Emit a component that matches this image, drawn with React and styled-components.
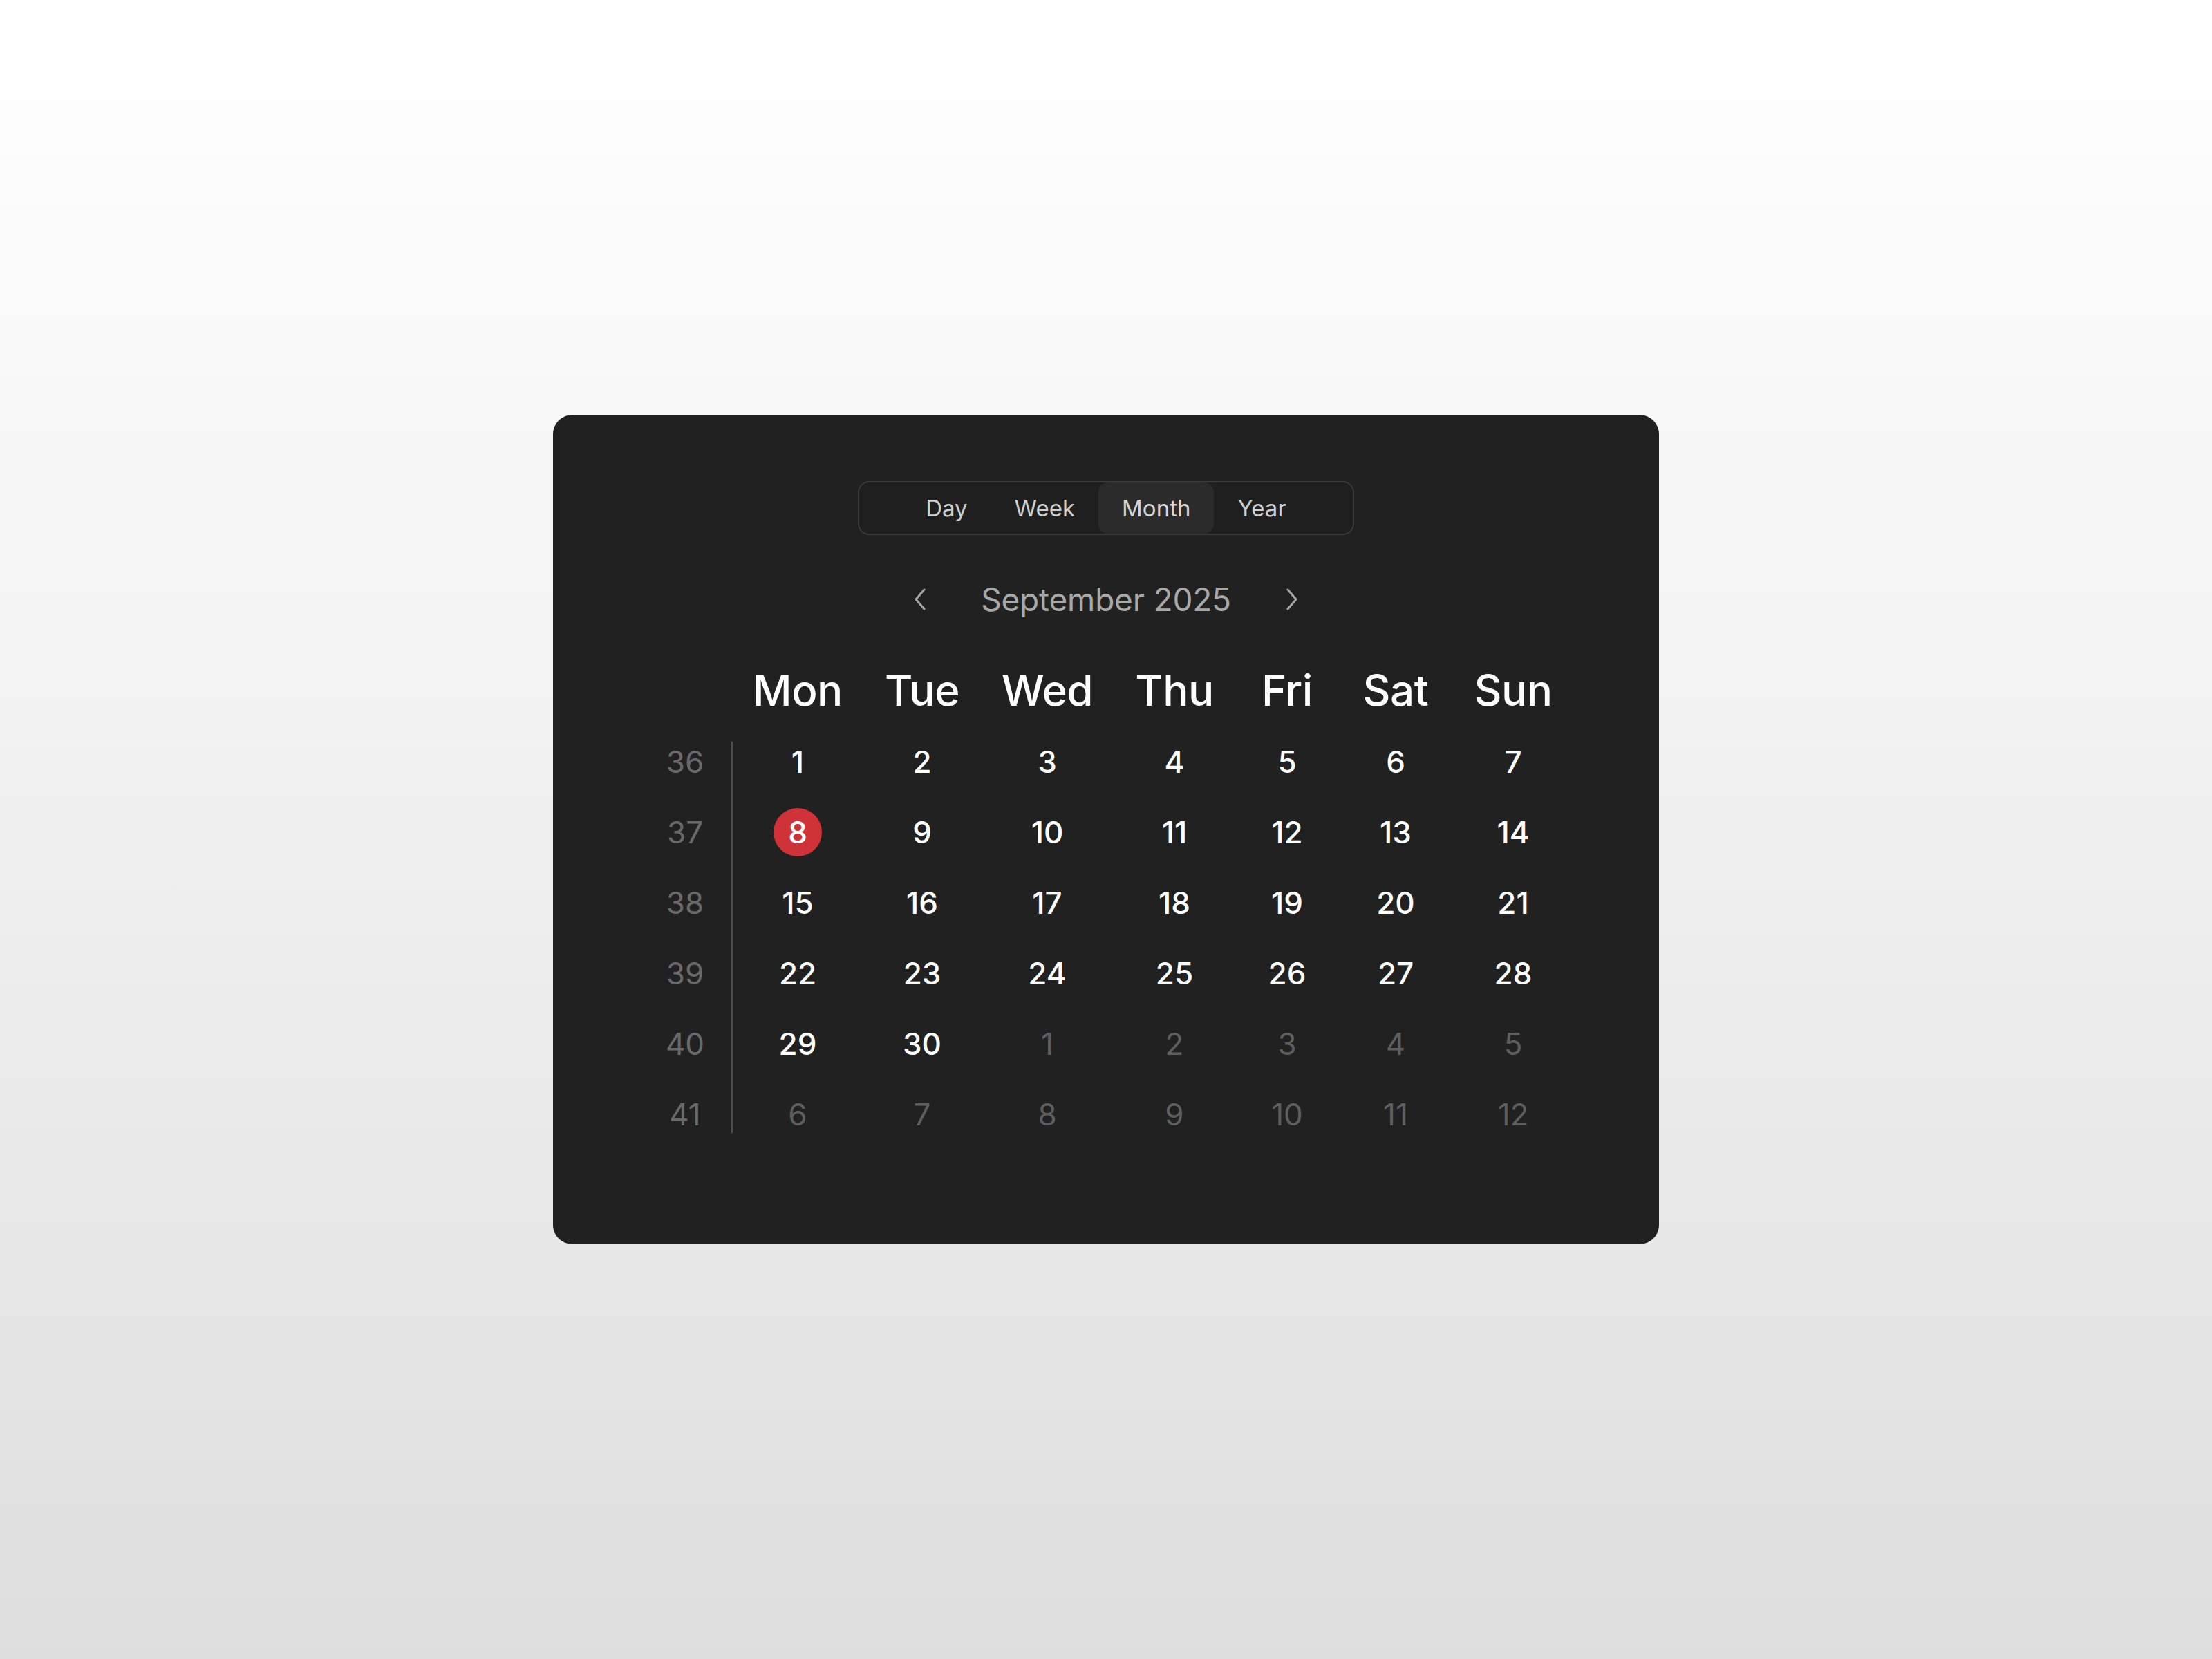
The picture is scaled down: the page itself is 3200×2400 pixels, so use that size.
import React from 'react'
import styled, { createGlobalStyle } from 'styled-components'

const GlobalStyle = createGlobalStyle`
  html, body {
    margin: 0;
    padding: 0;
  }
  body {
    font-family: Inter, "Noto Sans", sans-serif;
    background: linear-gradient(180deg, #ffffff 0%, #f3f3f3 40%, #dedede 100%);
    min-height: 2400px;
  }
`

const Page = styled.div`
  width: 3200px;
  height: 2400px;
  display: flex;
  align-items: flex-start;
  justify-content: center;
  padding-top: 600px;
  box-sizing: border-box;
`

const Card = styled.div`
  width: 1600px;
  height: 1200px;
  background: #212121;
  border-radius: 28px;
  padding-top: 96px;
  box-sizing: border-box;
  display: flex;
  flex-direction: column;
  align-items: center;
`

const Tabs = styled.div`
  display: flex;
  height: 78px;
  padding: 0 62px;
  box-sizing: border-box;
  border: 2px solid #393939;
  border-radius: 16px;
  background: #1f1f1f;
`

const Tab = styled.div`
  display: flex;
  align-items: center;
  padding: 0 34px;
  border-radius: 14px;
  font-size: 33px;
  color: ${(p) => (p.active ? '#d6d6d6' : '#cfcfcf')};
  background: ${(p) => (p.active ? '#2b2b2b' : 'transparent')};
`

const MonthNav = styled.div`
  display: flex;
  align-items: center;
  gap: 78px;
  height: 60px;
  margin-top: 63px;
`

const Title = styled.div`
  font-size: 46px;
  color: #a9a9a9;
  letter-spacing: -0.2px;
`

const Chevron = styled.svg`
  width: 20px;
  height: 32px;
  display: block;
`

const Calendar = styled.div`
  display: flex;
  flex-direction: column;
  margin-top: 61px;
  margin-left: 8px;
`

const HeaderRow = styled.div`
  display: flex;
  height: 80px;
  margin-bottom: 13px;
`

const Spacer = styled.div`
  width: 128px;
`

// column widths taken so that each day sits under its header
const COLS = '180px 180px 182px 186px 140px 174px 166px'

const DayHeaders = styled.div`
  display: grid;
  grid-template-columns: ${COLS};
  align-items: center;
  justify-items: center;
`

const DayName = styled.div`
  font-size: 62px;
  font-weight: 500;
  color: #ffffff;
  letter-spacing: -0.5px;
`

const Body = styled.div`
  display: flex;
`

const WeekColumn = styled.div`
  width: 110px;
  display: grid;
  grid-auto-rows: 102px;
  align-items: center;
  justify-items: center;
`

const WeekNo = styled.div`
  font-size: 44px;
  color: #6a6a6a;
`

const Divider = styled.div`
  width: 2px;
  background: #4f4f4f;
  margin: 22px 4px 24px 12px;
`

const Dates = styled.div`
  display: grid;
  grid-template-columns: ${COLS};
  grid-auto-rows: 102px;
  align-items: center;
  justify-items: center;
`

const DateCell = styled.div`
  width: 70px;
  height: 70px;
  border-radius: 50%;
  display: flex;
  align-items: center;
  justify-content: center;
  font-size: 44px;
  font-weight: ${(p) => (p.muted ? 400 : 500)};
  color: ${(p) => (p.muted ? '#5e5e5e' : '#ffffff')};
  background: ${(p) => (p.today ? '#cf3337' : 'transparent')};
`

const tabs = ['Day', 'Week', 'Month', 'Year']
const days = ['Mon', 'Tue', 'Wed', 'Thu', 'Fri', 'Sat', 'Sun']
const weeks = [36, 37, 38, 39, 40, 41]

const cells = []
for (let d = 1; d <= 30; d++) cells.push({ n: d, muted: false })
for (let d = 1; d <= 12; d++) cells.push({ n: d, muted: true })

const ChevronLeft = () => (
  <Chevron viewBox="0 0 20 32" fill="none">
    <path d="M16 2 L4 16 L16 30" stroke="#a8a8a8" strokeWidth="3" strokeLinecap="round" strokeLinejoin="round" />
  </Chevron>
)

const ChevronRight = () => (
  <Chevron viewBox="0 0 20 32" fill="none">
    <path d="M4 2 L16 16 L4 30" stroke="#a8a8a8" strokeWidth="3" strokeLinecap="round" strokeLinejoin="round" />
  </Chevron>
)

const App = () => (
  <>
    <GlobalStyle />
    <Page>
      <Card>
        <Tabs>
          {tabs.map((t) => (
            <Tab key={t} active={t === 'Month'}>{t}</Tab>
          ))}
        </Tabs>
        <MonthNav>
          <ChevronLeft />
          <Title>September 2025</Title>
          <ChevronRight />
        </MonthNav>
        <Calendar>
          <HeaderRow>
            <Spacer />
            <DayHeaders>
              {days.map((d) => (
                <DayName key={d}>{d}</DayName>
              ))}
            </DayHeaders>
          </HeaderRow>
          <Body>
            <WeekColumn>
              {weeks.map((w) => (
                <WeekNo key={w}>{w}</WeekNo>
              ))}
            </WeekColumn>
            <Divider />
            <Dates>
              {cells.map((c, i) => (
                <DateCell key={i} muted={c.muted} today={!c.muted && c.n === 8}>
                  {c.n}
                </DateCell>
              ))}
            </Dates>
          </Body>
        </Calendar>
      </Card>
    </Page>
  </>
)

export default App
